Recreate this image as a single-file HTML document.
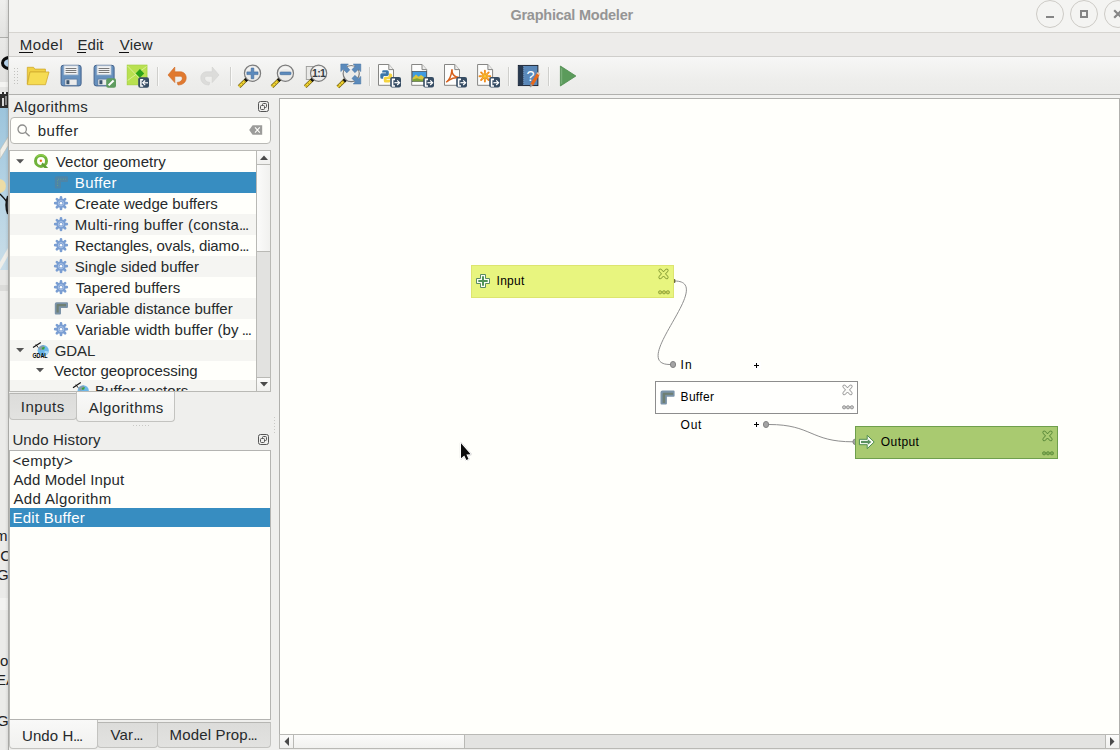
<!DOCTYPE html>
<html>
<head>
<meta charset="utf-8">
<title>Graphical Modeler</title>
<style>
*{box-sizing:border-box;margin:0;padding:0}
html,body{width:1120px;height:750px;overflow:hidden;background:#efefed}
body{font-family:"Liberation Sans",sans-serif;font-size:15px;color:#262a2c;position:relative}
.a{position:absolute}
.t{position:absolute;white-space:nowrap;line-height:1}
svg{position:absolute;overflow:visible}
/* left background strip */
#strip{left:0;top:0;width:8px;height:750px;background:#ebebe9;overflow:hidden}
#wb{left:8px;top:0;width:1px;height:750px;background:#a9a9a6}
/* window chrome */
#titlebar{left:9px;top:0;width:1111px;height:33px;background:#f4f4f2;border-bottom:1px solid #d6d4d0}
.wbtn{top:0;width:28px;height:28px;border-radius:50%;border:1px solid #cdcbc6;background:#f4f4f2}
#menubar{left:9px;top:33px;width:1111px;height:24px;background:#edecea;border-bottom:1px solid #cfcecb}
.ul{height:1px;background:#111;top:52px}
#toolbar{left:9px;top:57px;width:1111px;height:38px;background:linear-gradient(#f7f7f6,#eeeeec 60%,#ebebe9);border-bottom:1px solid #b1b1ae}
#tbgap{left:9px;top:95px;width:1111px;height:3px;background:#f2f2f0}
.sep{top:67px;width:2px;height:19px;background:linear-gradient(90deg,#cfcfcc 50%,#fafaf9 50%)}
.hd{width:1px;height:1px;background:#c4c4c1}
/* docks */
#search{left:10px;top:117px;width:261px;height:27px;background:#fffffb;border:1px solid #b9b9b5;border-radius:4px}
#tree{left:9px;top:150px;width:262px;height:242px;background:#fffffb;border:1px solid #b9b9b5;overflow:hidden}
.row{left:0;width:247px;height:21px}
.alt{background:#f5f5f2}
.sel{background:#378dc1}
#vsb{left:256px;top:150px;width:15px;height:242px;background:#e2e2e0;border:1px solid #b9b9b5}
.sbtn{background:linear-gradient(#fbfbfa,#f0f0ee);border:1px solid #b9b9b5}
.tab{border:1px solid #c3c3c0;border-top:none;border-radius:0 0 4px 4px}
.tab.off{background:linear-gradient(#dcdcda,#e2e2e0)}
.tab.on{background:linear-gradient(#f9f9f8,#f1f1ef)}
#undo{left:9px;top:450px;width:262px;height:270px;background:#fffffb;border:1px solid #b4b4b1}
#canvas{left:279px;top:98px;width:841px;height:637px;background:#fffffb;border:1px solid #b0b0ad}
#hsb{left:280px;top:735px;width:839px;height:13px;background:#e3e3e1}
.plus{width:8px;height:8px;background:#fff}
.plus:before{content:"";position:absolute;left:1.5px;top:3.4px;width:5px;height:1.3px;background:#000}
.plus:after{content:"";position:absolute;left:3.4px;top:1.5px;width:1.3px;height:5px;background:#000}
.dot{width:6.4px;height:6.4px;border-radius:50%;background:#a4a4a4;border:1px solid #828282}
</style>
</head>
<body>
<!-- background window peeking at the left -->
<div id="strip" class="a">
<div class="a" style="left:0;top:0;width:8px;height:38px;background:linear-gradient(#efefed,#e3e3e1);border-bottom:1px solid #aeaeab"></div>
<div class="a" style="left:0;top:38px;width:8px;height:44px;background:linear-gradient(#e9e9e7,#e1e1df)"></div>
<div class="a" style="left:1px;top:55.5px;width:17px;height:14px;border:3.2px solid #0c0c0c;border-radius:50%;background:#b9d6ee"></div>
<div class="a" style="left:0;top:82px;width:8px;height:5px;background:#f4f4f2"></div>
<div class="a" style="left:0;top:87px;width:8px;height:5px;background:#e6e6e4"></div>
<div class="a" style="left:0;top:92px;width:8px;height:16px;background:#2e2e2e"></div>
<div class="a" style="left:2px;top:98px;width:2px;height:8px;background:#d9d9d9"></div>
<div class="a" style="left:5px;top:96px;width:2px;height:9px;background:#8a8a8a"></div>
<div class="a" style="left:0;top:92px;width:8px;height:2px;background:repeating-linear-gradient(90deg,#eee 0 2px,#2e2e2e 2px 4px)"></div>
<div class="a" style="left:0;top:108px;width:8px;height:162px;background:linear-gradient(#9cc4dc,#b5d3e4 50%,#c9dde8)"></div>
<svg style="left:0;top:108px" width="8" height="162" viewBox="0 108 8 162">
  <path d="M0 150 L8 137 V146 L0 159 Z" fill="#f1efe8" stroke="#b9b9b0" stroke-width="0.6"/>
  <circle cx="-1" cy="186" r="7" fill="#ecdca6"/>
  <path d="M0 194 Q4 198 8 203" stroke="#111" stroke-width="1.3" fill="none"/>
  <path d="M8 196 Q4.5 205 8 214" stroke="#1a1a1a" stroke-width="2" fill="#3c4650"/>
  <path d="M0 262 L8 248 V256 L0 270 Z" fill="#efeee9"/>
</svg>
<div class="a" style="left:0;top:270px;width:8px;height:15px;background:#e7e7e5"></div>
<div class="a" style="left:0;top:285px;width:8px;height:6px;background:#dbdbd9"></div>
<div class="a" style="left:0;top:598px;width:8px;height:12px;background:#f3f3f1"></div>
<div class="a" style="left:5px;top:0;width:3px;height:750px;background:linear-gradient(90deg,rgba(0,0,0,0),rgba(0,0,0,0.07))"></div>
<span class="t" style="left:-5px;top:528px;font-size:15px;color:#222">m</span>
<span class="t" style="left:-4px;top:548px;font-size:15px;color:#222">.C</span>
<span class="t" style="left:-3px;top:567px;font-size:15px;color:#222">G</span>
<span class="t" style="left:0px;top:653px;font-size:15px;color:#222">o</span>
<span class="t" style="left:-4px;top:672px;font-size:15px;color:#222">EA</span>
<span class="t" style="left:-3px;top:713px;font-size:15px;color:#222">G</span>

</div>
<div id="wb" class="a"></div>

<!-- title bar -->
<div id="titlebar" class="a"></div>
<div class="wbtn a" style="left:1036px"></div>
<div class="wbtn a" style="left:1070px"></div>
<div class="wbtn a" style="left:1104px"></div>
<div class="a" style="left:1046px;top:16px;width:8px;height:2px;background:#858585"></div>
<div class="a" style="left:1080px;top:10px;width:8px;height:8px;border:2px solid #858585"></div>
<svg style="left:1113px;top:9px" width="10" height="10" viewBox="0 0 10 10"><path d="M1.2 1.2 L8.8 8.8 M8.8 1.2 L1.2 8.8" stroke="#858585" stroke-width="2.2" fill="none"/></svg>

<!-- menu bar -->
<div id="menubar" class="a"></div>
<div class="ul a" style="left:19px;width:14px"></div>
<div class="ul a" style="left:77px;width:9px"></div>
<div class="ul a" style="left:119px;width:10px"></div>

<!-- toolbar -->
<div id="toolbar" class="a"></div>
<div id="tbgap" class="a"></div>
<!-- toolbar handle -->
<div class="a" style="left:14px;top:68px;width:4px;height:16px;background:radial-gradient(circle at 0.5px 0.5px,#c2c2bf 0.6px,transparent 0.9px) 0 0/3px 3px"></div>
<div class="sep a" style="left:157px"></div>
<div class="sep a" style="left:230px"></div>
<div class="sep a" style="left:369px"></div>
<div class="sep a" style="left:508px"></div>
<div class="sep a" style="left:548px"></div>
<svg style="left:0;top:57px" width="1120" height="38" viewBox="0 57 1120 38">
<defs>
  <g id="floppy">
    <rect x="0.5" y="0.5" width="20" height="20.6" rx="2.2" fill="#6791be" stroke="#43628b"/>
    <rect x="3.4" y="1" width="14" height="9" fill="#f1f2f3" stroke="#b9c6d4" stroke-width="0.8"/>
    <path d="M5 3.7 H15.8 M5 5.7 H15.8 M5 7.7 H15.8" stroke="#6b6b6b" stroke-width="0.9"/>
    <rect x="4.3" y="14.3" width="12.2" height="6.2" fill="#ececeb" stroke="#56769c" stroke-width="0.7"/>
    <rect x="5.8" y="15.4" width="3" height="4" fill="#3c556f"/>
  </g>
  <g id="lens">
    <path d="M-5.6 5.8 L-13.4 13.4" stroke="#6b5a10" stroke-width="3.8" stroke-linecap="butt"/>
    <path d="M-5.6 5.8 L-13.4 13.4" stroke="#f4d733" stroke-width="2.4"/>
    <path d="M-5.6 5.8 L-13.4 13.4" stroke="#b59a1c" stroke-width="2.4" stroke-dasharray="0.8 2.2" stroke-dashoffset="-3"/>
    <path d="M-4.9 5.2 L-7.4 7.6" stroke="#111" stroke-width="3.4"/>
    <circle cx="0" cy="0" r="8.1" fill="#ebebe9" stroke="#7c7c7c" stroke-width="1.2"/>
    <path d="M-6.5 -2 A7 7 0 0 1 6.5 -2 A12 12 0 0 0 -6.5 -2 Z" fill="#f6f6f5" opacity="0.8"/>
  </g>
  <g id="page">
    <path d="M0.5 0.5 H10.8 L15.5 5.6 V21.3 H0.5 Z" fill="#fdfdfc" stroke="#868684" stroke-linejoin="round"/>
    <path d="M10.8 0.5 V5.6 H15.5" fill="#ededeb" stroke="#868684" stroke-linejoin="round"/>
  </g>
  <g id="xbadge">
    <rect x="0" y="0" width="10.8" height="10.5" rx="2" fill="#374d64"/>
    <path d="M4.8 2.3 H2.4 V8.9 H4.8" fill="none" stroke="#fff" stroke-width="1.6"/>
    <path d="M4.2 5.6 H9" stroke="#fff" stroke-width="1.2"/>
    <path d="M7 3.3 L9.4 5.6 L7 7.9" fill="none" stroke="#fff" stroke-width="1.2"/>
  </g>
</defs>
<!-- open -->
<path d="M27.3 67.3 H33.6 L34.8 69.1 H45.4 V72 H29.9 L27.3 84 Z" fill="#f1d144" stroke="#cfa92d" stroke-width="0.8" stroke-linejoin="round"/>
<path d="M30 72 H49 L45.5 84.7 H27.3 Z" fill="#f6dc52" stroke="#d1ab2e" stroke-width="0.8" stroke-linejoin="round"/>
<!-- save -->
<use href="#floppy" x="60.6" y="64.8"/>
<!-- save as -->
<use href="#floppy" x="93.6" y="64.8"/>
<rect x="106.2" y="78.2" width="9.8" height="9.5" rx="2" fill="#5f9c5f"/>
<path d="M108.6 85.4 L113.6 80.5" stroke="#fff" stroke-width="2"/>
<!-- save in project -->
<rect x="127.2" y="65.1" width="19.8" height="19.7" fill="#b9e150" stroke="#a3d23c" stroke-width="0.8"/>
<path d="M127.6 66 L142 81 M127.6 80.5 L146.6 66.5" stroke="#e2f3a6" stroke-width="0.8" fill="none"/>
<path d="M139.9 69 L144.2 73.4 L139.9 77.8 L135.6 73.4 Z" fill="#2ca318"/>
<rect x="138.2" y="77.3" width="10.8" height="10.4" rx="2" fill="#374d64"/>
<path d="M143.2 79.7 H140.9 V86 H143.2" fill="none" stroke="#fff" stroke-width="1.5"/>
<path d="M143 82.8 H148" stroke="#fff" stroke-width="1.2"/>
<path d="M145.2 80.5 L142.8 82.8 L145.2 85.1" fill="none" stroke="#fff" stroke-width="1.2"/>
<!-- undo / redo -->
<path id="undo" d="M168 75 L174.8 67 V71.8 H180 C184 71.8 186.2 74.5 186.2 77.8 C186.2 82 183 85 178 85 L177.2 82.4 C180.5 82.2 182.3 80.5 182.3 78.3 C182.3 76.8 181.2 76.3 179.8 76.3 H174.8 V82.6 Z" fill="#e0792f" stroke="#cf6a25" stroke-width="0.6" stroke-linejoin="round"/>
<path d="M219 75 L212.2 67 V71.8 H207 C203 71.8 200.8 74.5 200.8 77.8 C200.8 82 204 85 209 85 L209.8 82.4 C206.5 82.2 204.7 80.5 204.7 78.3 C204.7 76.8 205.8 76.3 207.2 76.3 H212.2 V82.6 Z" fill="#dcdcda" stroke="#d2d2d0" stroke-width="0.6" stroke-linejoin="round"/>
<!-- zoom in -->
<use href="#lens" x="252.5" y="73.2"/>
<path d="M251.2 68 H253.8 V71.9 H258 V74.6 H253.8 V78.7 H251.2 V74.6 H246.9 V71.9 H251.2 Z" fill="#5c8bbd" stroke="#41699a" stroke-width="0.6"/>
<!-- zoom out -->
<use href="#lens" x="285.4" y="73.2"/>
<rect x="280" y="72" width="11" height="2.7" rx="0.8" fill="#5c8bbd" stroke="#41699a" stroke-width="0.6"/>
<!-- zoom 1:1 -->
<rect x="306.3" y="66.5" width="9" height="13" fill="#e9e9e7" stroke="#9b9b99" stroke-width="0.9"/>
<use href="#lens" x="318.6" y="73.2"/>
<text x="318.6" y="77" text-anchor="middle" style="font-family:'Liberation Sans',sans-serif" font-weight="bold" font-size="10.5" fill="#363c43" letter-spacing="-0.6">1:1</text>
<!-- zoom full -->
<use href="#lens" x="351.2" y="73.6"/>
<g fill="#5b8abb" stroke="#4773a3" stroke-width="0.5" stroke-linejoin="round">
<path d="M340.8 64 H348.4 L346.3 66.2 L349.9 69.8 L346.8 72.9 L343.2 69.3 L340.8 71.6 Z"/>
<path d="M360.8 64 H353.2 L355.3 66.2 L351.9 69.6 L355 72.7 L358.4 69.3 L360.8 71.6 Z"/>
<path d="M360.8 84 H353.2 L355.3 81.8 L351.9 78.4 L355 75.3 L358.4 78.7 L360.8 76.4 Z"/>
</g>
<!-- export python -->
<use href="#page" x="378" y="64"/>
<path d="M383.4 70.2 H387.2 Q388.8 70.2 388.8 71.8 V74.6 Q388.8 76 387.2 76 H384.6 Q383.2 76 383.2 77.4 V78.8 H381.8 Q380.3 78.8 380.3 77.2 V74.8 Q380.3 73.3 381.8 73.3 H386 V72.6 H382.2 V71.6 Q382.2 70.2 383.4 70.2 Z" fill="#3b76a9"/>
<path d="M389 73.6 H390.6 Q392.2 73.6 392.2 75.2 V77.6 Q392.2 79.2 390.6 79.2 H386.6 V80 H390.2 V81 Q390.2 82.5 388.8 82.5 H385.4 Q383.8 82.5 383.8 81 V78.2 Q383.8 76.7 385.4 76.7 H387.8 Q389 76.7 389 75.3 Z" fill="#f5d440"/>
<use href="#xbadge" x="390.2" y="77.1"/>
<!-- export image -->
<use href="#page" x="411.2" y="64"/>
<rect x="412.2" y="71.4" width="14.4" height="10.2" fill="#3f9be0" stroke="#4a5866" stroke-width="0.8"/>
<path d="M412.6 78 L416 74.6 L418.5 76.8 L421 75 L426.2 78.6 V81.2 H412.6 Z" fill="#d9c63c"/>
<path d="M412.6 79.6 L417 78.2 L421 79.6 L426.2 79 V81.2 H412.6 Z" fill="#7ea23a"/>
<use href="#xbadge" x="423.2" y="77.1"/>
<!-- export pdf -->
<use href="#page" x="444" y="64"/>
<g fill="none" stroke="#d8611d" stroke-width="1.5" stroke-linecap="round">
<path d="M446.6 81.8 Q450.8 79.2 452 69.8"/><path d="M451.8 70.6 Q452.6 76.6 458.4 77.4"/><path d="M448 80.6 Q453 77.2 458.4 77.4"/>
</g>
<use href="#xbadge" x="456.2" y="77.1"/>
<!-- export svg -->
<use href="#page" x="477.1" y="64"/>
<g stroke="#f08a1c" stroke-width="1.9" stroke-linecap="round">
<path d="M484.9 70.8 V81.6 M479.5 76.2 H490.3 M481.1 72.4 L488.7 80 M488.7 72.4 L481.1 80"/>
</g>
<g stroke="#f8d43a" stroke-width="0.7"><path d="M484.9 72 V80.4 M480.7 76.2 H489.1 M482 73.3 L487.8 79.1 M487.8 73.3 L482 79.1"/></g>
<use href="#xbadge" x="489.2" y="77.1"/>
<!-- help -->
<rect x="518.3" y="65.4" width="19.6" height="20.2" fill="#5a88b9" stroke="#161c28" stroke-width="0.9"/>
<rect x="518.6" y="65.8" width="4.8" height="19.4" fill="#28394f"/>
<path d="M523.8 66 V85.3" stroke="#8fb0d3" stroke-width="0.6" stroke-dasharray="1 1"/>
<text x="530.6" y="81.2" text-anchor="middle" style="font-family:'Liberation Sans',sans-serif" font-weight="normal" font-size="14.5" fill="#fff">?</text>
<path d="M538.2 74 L531.6 85" stroke="#e8691b" stroke-width="3.2"/>
<path d="M531.9 84.4 L530.2 87" stroke="#9a9a9a" stroke-width="1.6"/>
<path d="M539 72.8 L538 74.4" stroke="#f4c9a8" stroke-width="3.2"/>
<!-- run -->
<path d="M560.4 66 L575.9 76 L560.4 86 Z" fill="#5b9b5b" stroke="#4c8c4c" stroke-width="0.8" stroke-linejoin="round"/>
<path d="M561.7 68.2 V83.8" stroke="#8fc08f" stroke-width="0.7"/>
</svg>


<!-- canvas -->
<div id="canvas" class="a"></div>
<div id="hsb" class="a"></div>

<!-- algorithms dock -->
<div id="search" class="a"></div>
<div id="tree" class="a">
<div class="a row sel" style="top:21px"></div>
<div class="a row alt" style="top:63px"></div>
<div class="a row alt" style="top:105px"></div>
<div class="a row alt" style="top:147px"></div>
<div class="a row alt" style="top:189px"></div>
<div class="a row alt" style="top:229px"></div>

</div>
<div class="a" style="left:10px;top:151px;width:246px;height:240px;overflow:hidden">
<svg style="left:0;top:0" width="246" height="240" viewBox="10 151 246 240">
<defs>
  <g id="gear">
    <g stroke="#7a9ed2" stroke-width="2.7" stroke-linecap="round">
      <path d="M0 -5.8 V5.8 M-5.8 0 H5.8 M-4.1 -4.1 L4.1 4.1 M4.1 -4.1 L-4.1 4.1"/>
    </g>
    <circle r="4.7" fill="#7a9ed2"/>
    <circle r="2.6" fill="none" stroke="#a9c2e6" stroke-width="1"/>
    <circle r="1.25" fill="#fff"/>
  </g>
  <g id="gdal">
    <circle cx="11" cy="9" r="5.6" fill="#6bb7ea"/>
    <path d="M6.3 6.5 Q8.5 4 11.2 3.6 Q13 5 12 7.2 Q10 9 8 8.6 Q6.5 8 6.3 6.5 Z" fill="#8a9aa8"/>
    <path d="M9.5 6.2 L12.6 5.2 L12 7.8 L10 8 Z" fill="#35a437"/>
    <path d="M12.5 9.5 Q15 9 16.4 10.5 Q15.5 13.5 13 14.2 Q12 12 12.5 9.5 Z" fill="#a8d8f4"/>
    <path d="M0.8 5.9 L8.6 0.8" stroke="#111" stroke-width="1.2"/>
    <path d="M3.6 2.8 L6 6" stroke="#111" stroke-width="0.9"/>
    <text x="0.2" y="16.3" style="font-family:'Liberation Sans',sans-serif" font-weight="bold" font-size="7.4" fill="#000" textLength="15.2" lengthAdjust="spacingAndGlyphs">GDAL</text>
  </g>
  <path id="tri" d="M0 0 H8 L4 4.2 Z" fill="#555"/>
</defs>
<!-- expanders -->
<use href="#tri" x="16.1" y="159.2"/>
<use href="#tri" x="16.1" y="348.1"/>
<use href="#tri" x="36" y="368.1"/>
<!-- QGIS provider icon -->
<circle cx="41" cy="160.9" r="5.5" fill="none" stroke="#70b23a" stroke-width="3"/>
<path d="M36.4 157.2 A6 6 0 0 1 45.4 156.8" fill="none" stroke="#8fd04a" stroke-width="1.2"/>
<path d="M42.6 162.4 L48.2 168 H44.4 L41.2 164.4 Z" fill="#5fa032"/>
<circle cx="40.9" cy="160.8" r="1.3" fill="#ee8a2c"/>
<circle cx="40.6" cy="160.7" r="0.6" fill="#dd5a22"/>
<!-- Buffer (selected, dimmed) -->
<g opacity="0.55">
<path d="M56.6 176.2 H67 Q68 176.2 68 177.2 V181 Q68 182 67 182 H61 V187.6 Q61 188.6 60 188.6 H55.8 Q54.8 188.6 54.8 187.6 V178 Q54.8 176.2 56.6 176.2 Z" fill="#5f7f95"/>
<path d="M57.6 186 V179.2 H66" fill="none" stroke="#8fae5a" stroke-width="1" stroke-dasharray="1 1.4"/>
</g>
<!-- gears -->
<use href="#gear" x="61" y="203.2"/>
<use href="#gear" x="61" y="224.2"/>
<use href="#gear" x="61" y="245.2"/>
<use href="#gear" x="61" y="266.2"/>
<use href="#gear" x="61" y="287.2"/>
<use href="#gear" x="61" y="329.2"/>
<!-- Variable distance buffer -->
<path d="M56.6 302.2 H67 Q68 302.2 68 303.2 V307 Q68 308 67 308 H61 V313.6 Q61 314.6 60 314.6 H55.8 Q54.8 314.6 54.8 313.6 V304 Q54.8 302.2 56.6 302.2 Z" fill="#7b93a8"/>
<path d="M57.6 312.4 V305.2 H66" fill="none" stroke="#6f7f72" stroke-width="2.2" stroke-linejoin="round"/>
<!-- GDAL icons -->
<use href="#gdal" x="32.2" y="341.6"/>
<use href="#gdal" x="72.2" y="381.8"/>
</svg>
</div>

<div id="vsb" class="a"></div>
<!-- vertical scrollbar pieces -->
<div class="a sbtn" style="left:256px;top:150px;width:15px;height:15px"></div>
<div class="a" style="left:256px;top:164px;width:15px;height:88px;border:1px solid #b9b9b5;background:linear-gradient(90deg,#fbfbfa,#f1f1ef)"></div>
<div class="a sbtn" style="left:256px;top:377px;width:15px;height:15px"></div>
<svg style="left:260px;top:155px" width="8" height="5" viewBox="0 0 8 5"><path d="M0 5 L4 0.5 L8 5 Z" fill="#4a4a4a"/></svg>
<svg style="left:260px;top:382px" width="8" height="5" viewBox="0 0 8 5"><path d="M0 0 L4 4.5 L8 0 Z" fill="#4a4a4a"/></svg>
<!-- float buttons -->
<svg style="left:258px;top:101px" width="11" height="11" viewBox="0 0 11 11"><rect x="0.5" y="0.5" width="10" height="10" rx="2" fill="none" stroke="#555" stroke-width="1"/><rect x="4.5" y="2.5" width="4" height="4" rx="1" fill="none" stroke="#555"/><rect x="2.5" y="4.5" width="4" height="4" rx="1" fill="#efefed" stroke="#555"/></svg>
<svg style="left:258px;top:434px" width="11" height="11" viewBox="0 0 11 11"><rect x="0.5" y="0.5" width="10" height="10" rx="2" fill="none" stroke="#555" stroke-width="1"/><rect x="4.5" y="2.5" width="4" height="4" rx="1" fill="none" stroke="#555"/><rect x="2.5" y="4.5" width="4" height="4" rx="1" fill="#efefed" stroke="#555"/></svg>
<!-- search + clear icons -->
<svg style="left:17px;top:124px" width="14" height="13" viewBox="0 0 14 13"><circle cx="5.2" cy="5.2" r="4.2" fill="none" stroke="#8e8e8c" stroke-width="1.3"/><path d="M8.3 8.3 L12.6 12.2" stroke="#8e8e8c" stroke-width="1.5"/></svg>
<svg style="left:249px;top:125px" width="13.2" height="10" viewBox="0 0 13.2 10"><path d="M0.2 5 L3.6 0.2 H13.2 V9.8 H3.6 Z" fill="#9c9c9a"/><path d="M6 2.4 L10.8 7.6 M10.8 2.4 L6 7.6" stroke="#fffffb" stroke-width="1.1"/></svg>
<!-- tabs (top dock) -->
<div class="a tab off" style="left:9px;top:393px;width:68px;height:26.5px;border-top:1px solid #b6b6b3"></div>
<div class="a tab on" style="left:76px;top:392px;width:99px;height:30px"></div>
<!-- splitter handles -->
<div class="a" style="left:133px;top:425px;width:16px;height:1px;background:repeating-linear-gradient(90deg,#c9c9c6 0 1px,transparent 1px 3px)"></div>
<div class="a" style="left:274px;top:417px;width:1px;height:16px;background:repeating-linear-gradient(#c9c9c6 0 1px,transparent 1px 3px)"></div>
<!-- tabs (bottom dock) -->
<div class="a tab on" style="left:9px;top:720px;width:89px;height:29px"></div>
<div class="a tab off" style="left:97px;top:722px;width:61px;height:26px;border-top:1px solid #b6b6b3"></div>
<div class="a tab off" style="left:157px;top:722px;width:114px;height:26px;border-top:1px solid #b6b6b3"></div>
<!-- horizontal scrollbar pieces -->
<div class="a sbtn" style="left:279px;top:734px;width:15px;height:15px"></div>
<div class="a" style="left:293px;top:734px;width:172px;height:15px;border:1px solid #b9b9b5;background:linear-gradient(#fbfbfa,#f1f1ef)"></div>
<div class="a" style="left:464px;top:734px;width:642px;height:15px;border-top:1px solid #b9b9b5;border-bottom:1px solid #b9b9b5"></div>
<div class="a sbtn" style="left:1105px;top:734px;width:15px;height:15px"></div>
<svg style="left:284px;top:737px" width="5" height="9" viewBox="0 0 5 9"><path d="M5 0 L0.5 4.5 L5 9 Z" fill="#4a4a4a"/></svg>
<svg style="left:1110px;top:737px" width="5" height="9" viewBox="0 0 5 9"><path d="M0 0 L4.5 4.5 L0 9 Z" fill="#4a4a4a"/></svg>


<!-- undo dock -->
<div id="undo" class="a">
  <div class="a sel" style="left:0;top:57px;width:260px;height:19px"></div>
</div>

<!-- connectors -->
<svg style="left:0;top:0" width="1120" height="750" viewBox="0 0 1120 750">
  <path d="M674.5 281 C717.5 281 627 364.5 670 364.5" fill="none" stroke="#8f8f8f" stroke-width="1"/>
  <path d="M769 424.5 C812 424.5 810 441.8 853 441.8" fill="none" stroke="#8f8f8f" stroke-width="1"/>
  <rect x="673.6" y="279" width="1.8" height="4" rx="0.9" fill="#6d6d3a"/>
  <circle cx="855.8" cy="441.8" r="2.9" fill="#a4a4a4" stroke="#828282" stroke-width="0.9"/>
</svg>
<!-- input node -->
<div class="a" style="left:471px;top:265px;width:203px;height:33px;background:#e8f57f;border:1px solid #dde56f"></div>
<svg style="left:476px;top:274px" width="14" height="14" viewBox="0 0 14 14"><path d="M4.5 0.5 H9.5 V4.5 H13.5 V9.5 H9.5 V13.5 H4.5 V9.5 H0.5 V4.5 H4.5 Z" fill="#fbfdf6" stroke="#5b8c63" stroke-width="1"/><path d="M6 2.3 H8 V6 H11.7 V8 H8 V11.7 H6 V8 H2.3 V6 H6 Z" fill="#4f9358"/></svg>
<svg style="left:658.2px;top:268.3px" width="11" height="12" viewBox="0 0 11 12"><g fill="none" stroke-linecap="round"><path d="M2.3 2.5 L8.7 9.3 M8.7 2.5 L2.3 9.3" stroke="#8aa038" stroke-width="3.8"/><path d="M2.3 2.5 L8.7 9.3 M8.7 2.5 L2.3 9.3" stroke="#e7f37c" stroke-width="2"/></g></svg>
<svg style="left:658px;top:290px" width="12" height="5" viewBox="0 0 12 5"><g fill="#cdd35c" stroke="#8aa038" stroke-width="0.9"><circle cx="2.1" cy="2.3" r="1.6"/><circle cx="6" cy="2.3" r="1.6"/><circle cx="9.9" cy="2.3" r="1.6"/></g></svg>
<!-- algorithm node -->
<div class="a" style="left:655px;top:381px;width:203px;height:33px;background:#fffffd;border:1px solid #8d8d8d"></div>
<svg style="left:660px;top:390px" width="15" height="15" viewBox="0 0 15 15"><path d="M2.5 0.4 H13.6 Q14.6 0.4 14.6 1.4 V5.8 Q14.6 6.8 13.6 6.8 H6.9 V13.5 Q6.9 14.5 5.9 14.5 H1.5 Q0.5 14.5 0.5 13.5 V2.4 Q0.5 0.4 2.5 0.4 Z" fill="#7b93a8"/><path d="M3.6 3.4 H12.6 V4.2 H4.6 V12.4 H3.2 V4 Q3.2 3.4 3.6 3.4 Z" fill="#6f7f72" stroke="#6f7f72" stroke-width="1.2" stroke-linejoin="round"/></svg>
<svg style="left:842.2px;top:383.9px" width="11" height="12" viewBox="0 0 11 12"><g fill="none" stroke-linecap="round"><path d="M2.3 2.5 L8.7 9.3 M8.7 2.5 L2.3 9.3" stroke="#9c9c9c" stroke-width="3.8"/><path d="M2.3 2.5 L8.7 9.3 M8.7 2.5 L2.3 9.3" stroke="#fbfbf9" stroke-width="2"/></g></svg>
<svg style="left:842px;top:405px" width="12" height="5" viewBox="0 0 12 5"><g fill="#cbcbcb" stroke="#8e8e8e" stroke-width="0.9"><circle cx="2.1" cy="2.3" r="1.6"/><circle cx="6" cy="2.3" r="1.6"/><circle cx="9.9" cy="2.3" r="1.6"/></g></svg>
<!-- sockets -->
<div class="a dot" style="left:669.8px;top:361.3px"></div>
<div class="a dot" style="left:762.8px;top:421.4px"></div>
<div class="a plus" style="left:752.5px;top:361.5px"></div>
<div class="a plus" style="left:752.5px;top:420.5px"></div>
<!-- output node -->
<div class="a" style="left:855px;top:426px;width:203px;height:33px;background:#a9ca70;border:1px solid #6f9f4c"></div>
<svg style="left:858px;top:433px" width="18" height="18" viewBox="858 433 18 18"><path d="M859.4 439.3 H867.2 V435.3 L874.2 442 L867.2 448.7 V444.7 H859.4 Z" fill="#fbfdf8" stroke="#4f8c4f" stroke-width="1" stroke-linejoin="miter"/><path d="M861 442 H868" stroke="#5a9060" stroke-width="2.2"/><path d="M867.8 439.2 L871.4 442 L867.8 444.8 Z" fill="#5a9060"/></svg>
<svg style="left:1042.2px;top:429.6px" width="11" height="12" viewBox="0 0 11 12"><g fill="none" stroke-linecap="round"><path d="M2.3 2.5 L8.7 9.3 M8.7 2.5 L2.3 9.3" stroke="#5d8c3c" stroke-width="3.8"/><path d="M2.3 2.5 L8.7 9.3 M8.7 2.5 L2.3 9.3" stroke="#abcc72" stroke-width="2"/></g></svg>
<svg style="left:1042px;top:451px" width="12" height="5" viewBox="0 0 12 5"><g fill="#82ac54" stroke="#5d8c3c" stroke-width="0.9"><circle cx="2.1" cy="2.3" r="1.6"/><circle cx="6" cy="2.3" r="1.6"/><circle cx="9.9" cy="2.3" r="1.6"/></g></svg>
<!-- mouse cursor -->
<svg style="left:455px;top:438px" width="24" height="28" viewBox="455 438 24 28"><path d="M461 443.2 L461 458.3 L464.3 455.4 L466.4 459.9 L468.5 459 L466.4 454.5 L470.6 454.3 Z" fill="#0c0c0c" stroke="#fff" stroke-width="2.2" stroke-linejoin="round" paint-order="stroke" style="filter:drop-shadow(0.4px 0.6px 0.5px rgba(0,0,0,0.35))"/></svg>


<span class="t" style="left:510.40px;top:7.53px;font-size:14.5px;font-weight:bold;color:#959595;letter-spacing:-0.237px">Graphical Modeler</span>
<span class="t" style="left:19.70px;top:36.60px;font-size:15px;font-weight:normal;color:#262a2c;letter-spacing:0.500px">Model</span>
<span class="t" style="left:77.60px;top:36.60px;font-size:15px;font-weight:normal;color:#262a2c;letter-spacing:0.000px">Edit</span>
<span class="t" style="left:119.70px;top:36.60px;font-size:15px;font-weight:normal;color:#262a2c;letter-spacing:0.233px">View</span>
<span class="t" style="left:13.60px;top:99.20px;font-size:15px;font-weight:normal;color:#262a2c;letter-spacing:0.378px">Algorithms</span>
<span class="t" style="left:37.75px;top:122.80px;font-size:15px;font-weight:normal;color:#262a2c;letter-spacing:0.500px">buffer</span>
<span class="t" style="left:20.80px;top:399.10px;font-size:15px;font-weight:normal;color:#262a2c;letter-spacing:0.520px">Inputs</span>
<span class="t" style="left:88.75px;top:400.00px;font-size:15px;font-weight:normal;color:#262a2c;letter-spacing:0.417px">Algorithms</span>
<span class="t" style="left:12.40px;top:431.80px;font-size:15px;font-weight:normal;color:#262a2c;letter-spacing:0.136px">Undo History</span>
<span class="t" style="left:12.50px;top:452.50px;font-size:15px;font-weight:normal;color:#262a2c;letter-spacing:0.333px">&lt;empty&gt;</span>
<span class="t" style="left:13.50px;top:471.50px;font-size:15px;font-weight:normal;color:#262a2c;letter-spacing:0.093px">Add Model Input</span>
<span class="t" style="left:13.50px;top:490.50px;font-size:15px;font-weight:normal;color:#262a2c;letter-spacing:0.358px">Add Algorithm</span>
<span class="t" style="left:12.50px;top:509.60px;font-size:15px;font-weight:normal;color:#ffffff;letter-spacing:0.250px">Edit Buffer</span>
<span class="t" style="left:73.00px;top:728.00px;font-size:15px;font-weight:normal;color:#262a2c;letter-spacing:-1.150px">...</span><span class="t" style="left:22.00px;top:728.00px;font-size:15px;font-weight:normal;color:#262a2c;letter-spacing:0.100px">Undo H</span>
<span class="t" style="left:133.30px;top:726.90px;font-size:15px;font-weight:normal;color:#262a2c;letter-spacing:-1.150px">...</span><span class="t" style="left:110.60px;top:726.90px;font-size:15px;font-weight:normal;color:#262a2c;letter-spacing:0.100px">Var</span>
<span class="t" style="left:247.40px;top:726.90px;font-size:15px;font-weight:normal;color:#262a2c;letter-spacing:-1.150px">...</span><span class="t" style="left:169.60px;top:726.90px;font-size:15px;font-weight:normal;color:#262a2c;letter-spacing:0.144px">Model Prop</span>
<span class="t" style="left:496.50px;top:274.84px;font-size:12px;font-weight:normal;color:#000;letter-spacing:0.300px">Input</span>
<span class="t" style="left:680.60px;top:358.59px;font-size:12px;font-weight:normal;color:#000;letter-spacing:1.000px">In</span>
<span class="t" style="left:680.60px;top:391.14px;font-size:12px;font-weight:normal;color:#000;letter-spacing:0.300px">Buffer</span>
<span class="t" style="left:680.60px;top:418.59px;font-size:12px;font-weight:normal;color:#000;letter-spacing:0.700px">Out</span>
<span class="t" style="left:880.80px;top:435.64px;font-size:12px;font-weight:normal;color:#000;letter-spacing:0.420px">Output</span>
<span class="t" style="left:55.80px;top:154.00px;font-size:15px;font-weight:normal;color:#262a2c;letter-spacing:0.057px">Vector geometry</span>
<span class="t" style="left:74.80px;top:175.00px;font-size:15px;font-weight:normal;color:#ffffff;letter-spacing:0.380px">Buffer</span>
<span class="t" style="left:74.80px;top:196.00px;font-size:15px;font-weight:normal;color:#262a2c;letter-spacing:-0.011px">Create wedge buffers</span>
<span class="t" style="left:239.00px;top:217.00px;font-size:15px;font-weight:normal;color:#262a2c;letter-spacing:-1.150px">...</span><span class="t" style="left:74.80px;top:217.00px;font-size:15px;font-weight:normal;color:#262a2c;letter-spacing:0.279px">Multi-ring buffer (consta</span>
<span class="t" style="left:239.20px;top:238.00px;font-size:15px;font-weight:normal;color:#262a2c;letter-spacing:-1.150px">...</span><span class="t" style="left:74.80px;top:238.00px;font-size:15px;font-weight:normal;color:#262a2c;letter-spacing:-0.135px">Rectangles, ovals, diamo</span>
<span class="t" style="left:74.80px;top:259.00px;font-size:15px;font-weight:normal;color:#262a2c;letter-spacing:0.011px">Single sided buffer</span>
<span class="t" style="left:75.80px;top:280.00px;font-size:15px;font-weight:normal;color:#262a2c;letter-spacing:0.036px">Tapered buffers</span>
<span class="t" style="left:75.80px;top:301.00px;font-size:15px;font-weight:normal;color:#262a2c;letter-spacing:0.030px">Variable distance buffer</span>
<span class="t" style="left:241.80px;top:322.00px;font-size:15px;font-weight:normal;color:#262a2c;letter-spacing:-1.150px">...</span><span class="t" style="left:75.80px;top:322.00px;font-size:15px;font-weight:normal;color:#262a2c;letter-spacing:0.096px">Variable width buffer (by</span>
<span class="t" style="left:54.80px;top:343.00px;font-size:15px;font-weight:normal;color:#262a2c;letter-spacing:-0.133px">GDAL</span>
<span class="t" style="left:54.00px;top:362.50px;font-size:15px;font-weight:normal;color:#262a2c;letter-spacing:-0.032px">Vector geoprocessing</span>
<div class="a" style="left:10px;top:151px;width:246px;height:240px;overflow:hidden"><span class="t" style="left:85.00px;top:232.00px;font-size:15px;font-weight:normal;color:#262a2c;letter-spacing:0.077px">Buffer vectors</span></div>
</body>
</html>
